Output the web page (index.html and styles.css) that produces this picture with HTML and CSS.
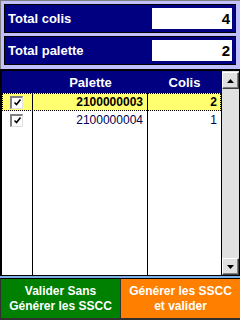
FILE: index.html
```html
<!DOCTYPE html>
<html lang="fr">
<head>
    <meta charset="UTF-8">
    <meta name="viewport" content="width=device-width, initial-scale=1.0">
    <title>Palettes</title>
    <link rel="stylesheet" href="styles.css">
</head>
<body>
    <div class="screen">
        <div class="totals">
            <div class="stat">
                <span class="stat-label">Total colis</span>
                <span class="stat-value">4</span>
            </div>
            <div class="stat">
                <span class="stat-label">Total palette</span>
                <span class="stat-value">2</span>
            </div>
        </div>

        <div class="grid">
            <div class="grid-body">
                <div class="grid-head">
                    <span></span>
                    <span>Palette</span>
                    <span>Colis</span>
                </div>
                <div class="row selected">
                    <span class="cell check"><span class="box"><svg width="9" height="9" viewBox="0 0 9 9"><path d="M1.5 4.5l2 2 4-5" stroke="#000" stroke-width="1.6" fill="none"/></svg></span></span>
                    <span class="cell num">2100000003</span>
                    <span class="cell num">2</span>
                </div>
                <div class="row">
                    <span class="cell check"><span class="box"><svg width="9" height="9" viewBox="0 0 9 9"><path d="M1.5 4.5l2 2 4-5" stroke="#000" stroke-width="1.6" fill="none"/></svg></span></span>
                    <span class="cell num">2100000004</span>
                    <span class="cell num">1</span>
                </div>
                <div class="row filler">
                    <span class="cell"></span>
                    <span class="cell"></span>
                    <span class="cell"></span>
                </div>
            </div>
            <div class="scrollbar">
                <div class="arrow"><svg width="7" height="4" viewBox="0 0 7 4"><path d="M3.5 0L7 4H0z" fill="#000"/></svg></div>
                <div class="track"></div>
                <div class="arrow"><svg width="7" height="4" viewBox="0 0 7 4"><path d="M0 0h7L3.5 4z" fill="#000"/></svg></div>
            </div>
        </div>

        <div class="separator"></div>

        <div class="actions">
            <button class="btn btn-green">Valider Sans<br>Générer les SSCC</button>
            <button class="btn btn-orange">Générer les SSCC<br>et valider</button>
        </div>
    </div>
</body>
</html>
```

FILE: styles.css
```css
body {
    margin: 0;
    padding: 0;
    font-family: "Liberation Sans", Arial, sans-serif;
}
.screen {
    width: 240px;
    height: 320px;
    display: flex;
    flex-direction: column;
    background-color: #c0c0ff;
}
.totals {
    display: flex;
    flex-direction: column;
    gap: 3px;
    padding: 3px 4px 4px 3px;
    border-left: 1px solid #808080;
    border-top: 1px solid #808080;
}
.stat {
    height: 29px;
    box-sizing: border-box;
    border: 1px solid #000;
    background-color: #000080;
    display: flex;
    align-items: center;
    justify-content: space-between;
    padding: 0 3px;
}
.stat-label {
    color: #fff;
    font-weight: bold;
    font-size: 13px;
}
.stat-value {
    width: 80px;
    height: 21px;
    box-sizing: border-box;
    background-color: #fff;
    text-align: right;
    padding-right: 2px;
    font-weight: bold;
    font-size: 15px;
    line-height: 21px;
    color: #000;
}
.grid {
    flex: 1;
    display: flex;
    background-color: #fff;
    border-top: 2px solid #000;
    border-left: 2px solid #000;
    border-right: 1px solid #000;
    border-bottom: 1px solid #000;
    min-height: 0;
}
.grid-body {
    width: 219px;
    display: flex;
    flex-direction: column;
}
.grid-head {
    height: 22px;
    background-color: #000080;
    color: #fff;
    font-weight: bold;
    font-size: 13px;
    display: grid;
    grid-template-columns: 31px 115px 73px;
    align-items: center;
    text-align: center;
}
.row {
    height: 18px;
    display: grid;
    grid-template-columns: 31px 115px 73px;
    font-size: 12px;
    color: #000050;
}
.row.selected {
    background-color: #ffff70;
    color: #000;
    font-weight: bold;
    outline: 1px dotted #000;
    outline-offset: -1px;
}
.row.filler {
    flex: 1;
    height: auto;
}
.cell {
    box-sizing: border-box;
    line-height: 18px;
}
.cell:nth-child(1),
.cell:nth-child(2) {
    border-right: 1px solid #000;
}
.num {
    text-align: right;
    padding-right: 4px;
}
.check {
    display: flex;
    align-items: center;
    padding-left: 8px;
}
.box {
    width: 13px;
    height: 13px;
    box-sizing: border-box;
    background-color: #fff;
    border-top: 2px solid #808080;
    border-left: 2px solid #808080;
    border-right: 1px solid #e0e0e0;
    border-bottom: 1px solid #e0e0e0;
    display: flex;
    align-items: center;
    justify-content: center;
}
.scrollbar {
    width: 18px;
    box-sizing: border-box;
    border-left: 1px solid #000;
    background-color: #e0e0e0;
    display: flex;
    flex-direction: column;
    padding-top: 1px;
}
.arrow {
    width: 17px;
    height: 17px;
    box-sizing: border-box;
    background-color: #e0e0e0;
    border: 1px solid;
    border-color: #fff #404040 #404040 #fff;
    box-shadow: inset -1px -1px #808080;
    display: flex;
    align-items: center;
    justify-content: center;
}
.track {
    flex: 1;
}
.separator {
    height: 2px;
    background-color: #80b0e8;
}
.actions {
    display: flex;
    border-top: 1px solid #000;
    border-bottom: 2px solid #303030;
    border-left: 1px solid #303030;
    background-color: #303030;
    gap: 1px;
}
.btn {
    flex: 1;
    height: 39px;
    border: none;
    padding: 0;
    margin: 0;
    color: #fff;
    font-family: "Liberation Sans", Arial, sans-serif;
    font-weight: bold;
    font-size: 12px;
    line-height: 15px;
    text-align: center;
}
.btn-green {
    background-color: #008000;
}
.btn-orange {
    background-color: #ff8000;
}
```
